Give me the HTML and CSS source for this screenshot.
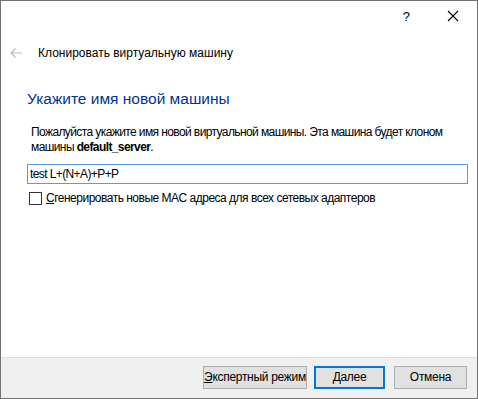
FILE: index.html
```html
<!DOCTYPE html>
<html lang="ru">

<head>
    <meta charset="UTF-8">
    <meta name="viewport" content="width=device-width, initial-scale=1.0">
    <title>Клонировать виртуальную машину</title>
    <link rel="stylesheet" href="styles.css">
</head>

<body>
    <div class="window">
        <div class="titlebar">
            <span class="help">?</span>
            <span class="close">
                <svg width="12" height="12" viewBox="0 0 12 12">
                    <path d="M1 1 L11 11 M11 1 L1 11" stroke="#000" stroke-width="1.1" fill="none" />
                </svg>
            </span>
        </div>
        <div class="header">
            <svg class="back" width="14" height="12" viewBox="0 0 14 12">
                <path d="M13 6 H2 M6.5 1.5 L2 6 L6.5 10.5" stroke="#bdbdbd" stroke-width="1.2" fill="none" />
            </svg>
            <span class="wizard-title">Клонировать виртуальную машину</span>
        </div>
        <div class="content">
            <h2>Укажите имя новой машины</h2>
            <p class="intro">Пожалуйста укажите имя новой виртуальной машины. Эта машина будет клоном<br>
                машины <b>default_server</b>.</p>
            <input type="text" class="name-input" value="test L+(N+A)+P+P">
            <label class="check">
                <span class="box"></span>
                <span><u>С</u>генерировать новые MAC адреса для всех сетевых адаптеров</span>
            </label>
        </div>
        <div class="footer">
            <button class="btn expert"><u>Э</u>кспертный режим</button>
            <button class="btn default"><u>Д</u>алее</button>
            <button class="btn">Отмена</button>
        </div>
    </div>
</body>

</html>
```

FILE: styles.css
```css
body {
    margin: 0;
    padding: 0;
    font-family: "Liberation Sans", Arial, sans-serif;
    font-size: 12px;
    color: #000;
}

.window {
    width: 478px;
    height: 399px;
    box-sizing: border-box;
    border: 1px solid #737373;
    background-color: #fff;
    display: flex;
    flex-direction: column;
}

.titlebar {
    height: 30px;
    display: flex;
    align-items: center;
    justify-content: flex-end;
    padding-right: 18px;
}

.help {
    font-size: 13px;
    margin-right: 37px;
    margin-top: 1px;
}

.close {
    display: flex;
}

.header {
    height: 44px;
    display: flex;
    align-items: center;
    padding-left: 8px;
}

.back {
    margin-right: 15px;
}

.wizard-title {
    font-size: 12px;
}

.content {
    padding: 13px 10px 0 25px;
}

h2 {
    margin: 0 0 15px 1px;
    font-size: 15.5px;
    font-weight: normal;
    color: #003399;
    line-height: 22px;
}

.intro {
    margin: 0 0 9px 5px;
    line-height: 15px;
    font-size: 12px;
    letter-spacing: -0.6px;
    white-space: nowrap;
}

.name-input {
    display: block;
    width: 441px;
    height: 20px;
    box-sizing: border-box;
    margin: 0 0 7px 1px;
    padding: 0 2px;
    border: 1px solid #5a9be0;
    font-family: inherit;
    font-size: 12px;
    letter-spacing: -0.6px;
    outline: none;
}

.check {
    display: flex;
    align-items: center;
    margin-left: 3px;
    gap: 4px;
    letter-spacing: -0.5px;
}

.check .box {
    width: 13px;
    height: 13px;
    box-sizing: border-box;
    border: 1px solid #333;
    background: #fff;
}

.footer {
    margin-top: auto;
    height: 41px;
    box-sizing: border-box;
    background-color: #f0f0f0;
    border-top: 1px solid #dfdfdf;
    display: flex;
    align-items: center;
    justify-content: flex-end;
    padding: 0 10px 2px 0;
    gap: 9px;
}

.btn {
    height: 23px;
    width: 73px;
    padding: 0;
    background-color: #e1e1e1;
    border: 1px solid #adadad;
    font-family: inherit;
    font-size: 12px;
    color: #000;
    white-space: nowrap;
    letter-spacing: -0.3px;
}

.btn.expert {
    width: 104px;
    margin-right: -2px;
}

.btn.default {
    width: 71px;
    border: 2px solid #0078d7;
}
```
